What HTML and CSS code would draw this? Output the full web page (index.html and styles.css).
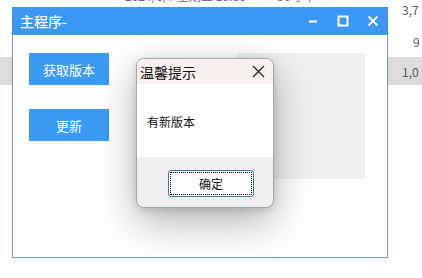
FILE: index.html
```html
<!DOCTYPE html>
<html>
<head>
<meta charset="utf-8">
<link rel="stylesheet" href="styles.css">
</head>
<body>
<div class="desk">
  <div class="row row-a"><span class="c-date">2024/6/7 星期五 10:36</span><span class="c-type">56 字节</span><span class="c-size">3,7</span></div>
  <div class="row row-b"><span class="c-size">9</span></div>
  <div class="row row-c"><span class="c-size">1,0</span></div>
</div>

<div class="window">
  <div class="titlebar">
    <span class="wtitle">主程序-</span>
    <div class="controls">
      <svg class="ctl" width="12" height="12" viewBox="0 0 12 12"><path d="M2 6.5h8" stroke="#fff" stroke-width="2"/></svg>
      <svg class="ctl" width="12" height="12" viewBox="0 0 12 12"><rect x="1.5" y="1.5" width="9" height="9" fill="none" stroke="#fff" stroke-width="2"/></svg>
      <svg class="ctl" width="12" height="12" viewBox="0 0 12 12"><path d="M1.5 1.5l9 9M10.5 1.5l-9 9" stroke="#fff" stroke-width="1.8"/></svg>
    </div>
  </div>
  <div class="content">
    <div class="btncol">
      <div class="btn">获取版本</div>
      <div class="btn">更新</div>
    </div>
    <div class="panel"></div>
  </div>
</div>

<div class="dialog">
  <div class="dtitle">
    <span>温馨提示</span>
    <svg width="13" height="13" viewBox="0 0 13 13"><path d="M1 1l11 11M12 1L1 12" stroke="#222" stroke-width="1.2"/></svg>
  </div>
  <div class="dbody">有新版本</div>
  <div class="dfoot">
    <div class="okbtn"><div class="focus">确定</div></div>
  </div>
</div>
</body>
</html>
```

FILE: styles.css
```css
html, body {
  margin: 0;
  padding: 0;
}
body {
  width: 422px;
  height: 278px;
  overflow: hidden;
  position: relative;
  background: #ffffff;
  font-family: "Noto Sans CJK SC", "Noto Sans", sans-serif;
}
.desk {
  display: flex;
  flex-direction: column;
  margin-top: -6px;
}
.row {
  position: relative;
  height: 31px;
  display: flex;
  align-items: center;
  font-size: 12px;
  color: #555;
}
.row-b { height: 32px; }
.row-c {
  height: 28px;
  background: #dcdcdc;
}
.c-size {
  position: absolute;
  left: 402px;
  white-space: nowrap;
}
.row-b .c-size { left: 413px; }
.c-date {
  position: absolute;
  left: 125px;
  top: -7px;
  color: #666;
}
.c-type {
  position: absolute;
  left: 277px;
  top: -7px;
  color: #666;
}

.window {
  position: absolute;
  left: 12px;
  top: 7px;
  width: 374px;
  height: 250px;
  border: 1px solid #7f9cb4;
  border-top: none;
  background: #ffffff;
  box-shadow: 0 2px 4px rgba(120, 170, 220, 0.15);
}
.titlebar {
  height: 28px;
  margin: 0 -1px;
  background: #3a97f4;
  display: flex;
  align-items: center;
  padding: 0 0 0 8px;
}
.wtitle {
  color: #fff;
  font-size: 14px;
  font-weight: 500;
}
.controls {
  margin-left: auto;
  display: flex;
  gap: 18px;
  margin-right: 9px;
}
.ctl { display: block; }
.content {
  display: flex;
  padding: 18px 0 0 16px;
}
.btncol {
  display: flex;
  flex-direction: column;
  gap: 24px;
}
.btn {
  width: 80px;
  height: 32px;
  background: #3a9bf5;
  color: #fff;
  font-size: 13px;
  display: flex;
  align-items: center;
  justify-content: center;
}
.panel {
  margin-left: 128px;
  width: 128px;
  height: 126px;
  background: #f0f0f0;
}

.dialog {
  position: absolute;
  left: 136px;
  top: 58px;
  width: 136px;
  height: 148px;
  border: 1px solid #a8a8a8;
  border-radius: 8px;
  overflow: hidden;
  background: #f0f0f0;
  box-shadow: 0 14px 40px rgba(0, 0, 0, 0.3), 0 2px 8px rgba(0, 0, 0, 0.15);
  display: flex;
  flex-direction: column;
}
.dtitle {
  height: 25px;
  background: #f8f0ee;
  display: flex;
  align-items: center;
  padding: 0 8px 0 3px;
  font-size: 14px;
  color: #111;
}
.dtitle svg { margin-left: auto; }
.dbody {
  height: 73px;
  background: #fff;
  font-size: 12px;
  color: #111;
  padding-left: 10px;
  display: flex;
  align-items: center;
  padding-top: 2px;
  box-sizing: border-box;
}
.dfoot {
  flex: 1;
  display: flex;
  justify-content: center;
  padding-top: 13px;
  padding-left: 12px;
}
.okbtn {
  width: 82px;
  height: 23px;
  border: 1px solid #3d7ea8;
  border-radius: 3px;
  background: #fdfdfd;
  padding: 1px;
}
.focus {
  height: 100%;
  box-sizing: border-box;
  border: 1px dotted #000;
  display: flex;
  align-items: center;
  justify-content: center;
  font-size: 12px;
  color: #111;
}
```
